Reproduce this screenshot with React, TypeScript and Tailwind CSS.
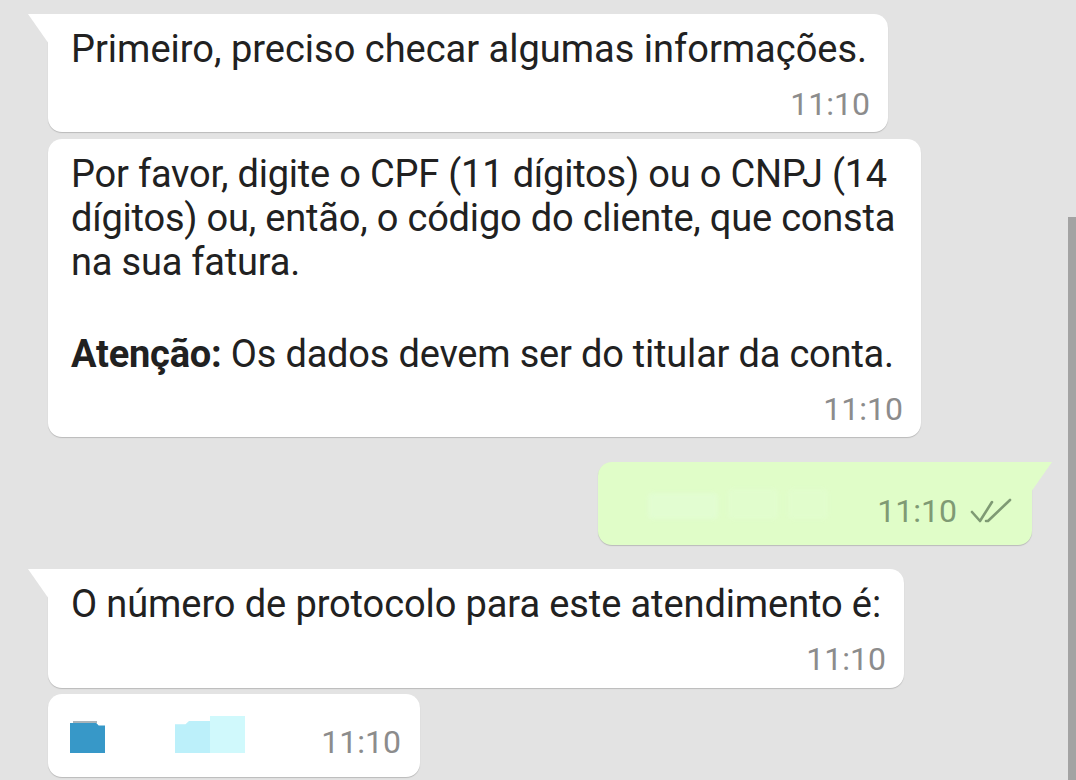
import React from 'react';

const font = { fontFamily: 'Roboto, "Noto Sans", sans-serif' };

const Tail: React.FC<{ side: 'left' | 'right'; color: string }> = ({ side, color }) =>
  side === 'left' ? (
    <div className={`absolute top-0 -left-[20px] w-[21px] h-[30px] ${color} [clip-path:polygon(0_0,100%_0,100%_100%)]`} />
  ) : (
    <div className={`absolute top-0 -right-[20px] w-[21px] h-[30px] ${color} [clip-path:polygon(0_0,100%_0,0_100%)]`} />
  );

const Time: React.FC<{ out?: boolean }> = ({ out }) => (
  <div className={`flex items-center justify-end gap-[13px] text-[32px] leading-none ${out ? 'text-[#7f9a74]' : 'text-[#8c8c8c]'}`}>
    <span>11:10</span>
    {out && (
      <svg width="42" height="26" viewBox="0 0 42 26" fill="none" stroke="#7f9a74" strokeWidth="2.6" strokeLinecap="round" strokeLinejoin="round">
        <path d="M2 14 L10 23 L22 4" />
        <path d="M16 23 L18 23 L40 2" />
      </svg>
    )}
  </div>
);

export default function App() {
  return (
    <div style={font} className="relative w-[1076px] h-[780px] overflow-hidden bg-[#e3e3e3]">
      <div className="flex flex-col items-start pl-[48px] pr-[44px] pt-[14px]">
        {/* 1 */}
        <div className="relative bg-white rounded-[14px] rounded-tl-none shadow-[0_1px_1px_rgba(0,0,0,0.18)] w-[840px] pl-[23px] pr-[18px] pt-[13px] pb-[12px]">
          <Tail side="left" color="bg-white" />
          <p className="whitespace-nowrap text-[38px] leading-[44px] text-[#212121]">Primeiro, preciso checar algumas informações.</p>
          <div className="mt-[17px]"><Time /></div>
        </div>

        {/* 2 */}
        <div className="relative mt-[7px] bg-white rounded-[14px] shadow-[0_1px_1px_rgba(0,0,0,0.18)] w-[873px] pl-[23px] pr-[18px] pt-[13px] pb-[12px]">
          <div className="whitespace-nowrap text-[38px] leading-[44px] text-[#212121] tracking-[-0.2px]">
            <p>Por favor, digite o CPF (11 dígitos) ou o CNPJ (14</p>
            <p>dígitos) ou, então, o código do cliente, que consta</p>
            <p>na sua fatura.</p>
            <p className="mt-[48px]">
              <span className="font-bold">Atenção:</span> Os dados devem ser do titular da conta.
            </p>
          </div>
          <div className="mt-[17px]"><Time /></div>
        </div>

        {/* 3 outgoing */}
        <div className="relative self-end mt-[25px] bg-[#e0fdc8] rounded-[14px] rounded-tr-none shadow-[0_1px_1px_rgba(0,0,0,0.18)] w-[434px] h-[83px] pl-[50px] pr-[20px] flex items-center justify-between">
          <Tail side="right" color="bg-[#e0fdc8]" />
          <div className="flex items-end gap-[10px] blur-[2px] opacity-70">
            <div className="w-[70px] h-[26px] rounded-[4px] bg-[#e3fdd6]" />
            <div className="w-[50px] h-[30px] rounded-[4px] bg-[#e2fdd0]" />
            <div className="w-[40px] h-[30px] rounded-[4px] bg-[#e2fdcf]" />
          </div>
          <div className="pt-[14px]"><Time out /></div>
        </div>

        {/* 4 */}
        <div className="relative mt-[24px] bg-white rounded-[14px] rounded-tl-none shadow-[0_1px_1px_rgba(0,0,0,0.18)] w-[856px] pl-[23px] pr-[18px] pt-[13px] pb-[13px]">
          <Tail side="left" color="bg-white" />
          <p className="whitespace-nowrap text-[38px] leading-[44px] text-[#212121] tracking-[-0.1px]">O número de protocolo para este atendimento é:</p>
          <div className="mt-[17px]"><Time /></div>
        </div>

        {/* 5 */}
        <div className="relative mt-[6px] bg-white rounded-[14px] shadow-[0_1px_1px_rgba(0,0,0,0.18)] w-[372px] h-[83px] pl-[22px] pr-[19px] flex items-center justify-between">
          <div className="flex items-end pb-[2px]">
            <div className="flex flex-col">
              <div className="w-[24px] h-[2px] ml-[3px] bg-[#a9b4ba]" />
              <div className="w-[35px] h-[30px] bg-[#3798c8] [clip-path:polygon(0_0,75%_0,82%_8%,100%_8%,100%_100%,0_100%)]" />
            </div>
            <div className="w-[70px] h-[30px]" />
            <div className="w-[35px] h-[32px] bg-[#bcf0fa] [clip-path:polygon(0_10%,30%_10%,40%_0,100%_0,100%_100%,0_100%)]" />
            <div className="w-[35px] h-[37px] bg-[#d0f9fc]" />
          </div>
          <div className="pt-[12px]"><Time /></div>
        </div>
      </div>

      <div className="absolute right-0 top-[217px] bottom-0 w-[8px] bg-[#a3a3a3]" />
    </div>
  );
}
